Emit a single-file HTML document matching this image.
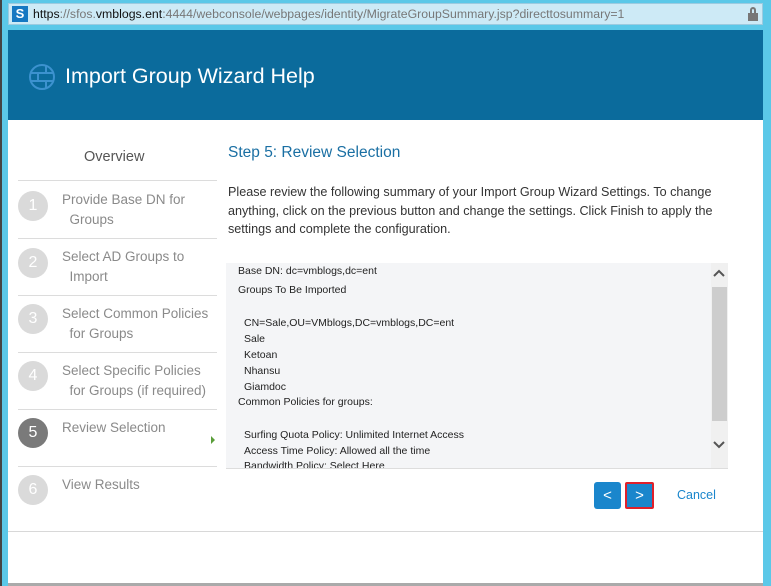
<!DOCTYPE html>
<html><head><style>
*{margin:0;padding:0;box-sizing:border-box}
body{width:771px;height:586px;background:#5bc8e8;font-family:"Liberation Sans",sans-serif;position:relative;overflow:hidden}
.abs{position:absolute}
#url{left:8px;top:3px;width:755px;height:22px;background:#cdeaf6;border:1px solid #9ccbe0}
#hdr{left:8px;top:30px;width:755px;height:90px;background:#0b6b9c}
#main{left:8px;top:120px;width:755px;height:464px;background:#fff}
.nav{left:18px;width:199px;border-top:1px solid #dcdcdc}
.circ{position:absolute;left:0;width:30px;height:30px;border-radius:50%;background:#dadada;color:#fff;font-size:16px;text-align:center;line-height:30px}
.nt{position:absolute;left:44px;color:#8a8a8a;font-size:13.5px;line-height:20px}
.bx{font-size:10.5px;color:#222;position:absolute;left:238px}
</style></head><body>
<div class="abs" style="left:0;top:0;width:2px;height:586px;background:#444"></div>
<div class="abs" id="url">
 <div class="abs" style="left:3px;top:2px;width:16px;height:16px;background:#1578c2;color:#fff;font-size:13px;font-weight:bold;text-align:center;line-height:16px">S</div>
 <div class="abs" style="left:24px;top:3px;font-size:12.3px;color:#777;white-space:nowrap"><span style="color:#111">https</span>://sfos.<span style="color:#111">vmblogs.ent</span>:4444/webconsole/webpages/identity/MigrateGroupSummary.jsp?directtosummary=1</div>
 <div class="abs" style="left:739px;top:9px;width:10px;height:8px;background:#777"></div>
 <div class="abs" style="left:741px;top:3px;width:6px;height:8px;border:2px solid #777;border-bottom:none;border-radius:3px 3px 0 0"></div>
</div>
<div class="abs" id="hdr">
 <svg class="abs" style="left:20px;top:33px" width="28" height="28" viewBox="0 0 28 28" fill="none" stroke="#3c92cf" stroke-width="2"><circle cx="14" cy="14" r="12"/><path d="M2 10H26M2 18H26M10 10V18M18 2V10M18 18V26"/></svg>
 <div class="abs" style="left:57px;top:34px;color:#fff;font-size:21.5px">Import Group Wizard Help</div>
</div>
<div class="abs" id="main"></div>
<div class="abs" style="left:8px;top:531px;width:755px;height:1px;background:#d8d8d8"></div>
<div class="abs" style="left:8px;top:583px;width:755px;height:3px;background:#aaa"></div>
<div class="abs" style="left:84px;top:149px;font-size:14.5px;color:#555">Overview</div>
<div class="abs nav" style="top:180px;height:58px"><div class="circ" style="top:10px">1</div><div class="nt" style="top:9px">Provide Base DN for<br>&nbsp;&nbsp;Groups</div></div>
<div class="abs nav" style="top:238px;height:57px"><div class="circ" style="top:9px">2</div><div class="nt" style="top:8px">Select AD Groups to<br>&nbsp;&nbsp;Import</div></div>
<div class="abs nav" style="top:295px;height:57px"><div class="circ" style="top:8px">3</div><div class="nt" style="top:8px">Select Common Policies<br>&nbsp;&nbsp;for Groups</div></div>
<div class="abs nav" style="top:352px;height:57px"><div class="circ" style="top:8px">4</div><div class="nt" style="top:8px">Select Specific Policies<br>&nbsp;&nbsp;for Groups (if required)</div></div>
<div class="abs nav" style="top:409px;height:57px"><div class="circ" style="top:8px;background:#7a7a7a">5</div><div class="nt" style="top:8px">Review Selection</div>
 <div class="abs" style="left:193px;top:26px;width:0;height:0;border-left:4px solid #5a9e3a;border-top:4px solid transparent;border-bottom:4px solid transparent"></div></div>
<div class="abs nav" style="top:466px;height:57px"><div class="circ" style="top:8px">6</div><div class="nt" style="top:8px">View Results</div></div>
<div class="abs" style="left:228px;top:144px;font-size:15.5px;color:#1a6fa3">Step 5: Review Selection</div>
<div class="abs" style="left:228px;top:183px;width:505px;font-size:12.6px;color:#333;line-height:18.5px">Please review the following summary of your Import Group Wizard Settings. To change anything, click on the previous button and change the settings. Click Finish to apply the settings and complete the configuration.</div>
<div class="abs" style="left:226px;top:263px;width:485px;height:205px;background:#f4f5f7;overflow:hidden"></div>
<div class="abs" style="left:711px;top:263px;width:17px;height:205px;background:#f0f0f0"></div>
<div class="abs" style="left:712px;top:287px;width:15px;height:134px;background:#cdcdcd"></div>
<svg class="abs" style="left:713px;top:440px" width="12" height="10"><path d="M1 2L6 7L11 2" stroke="#555" stroke-width="2" fill="none"/></svg>
<svg class="abs" style="left:713px;top:268px" width="12" height="10"><path d="M1 8L6 3L11 8" stroke="#555" stroke-width="2" fill="none"/></svg>
<div class="abs" style="left:226px;top:468px;width:502px;height:1px;background:#ddd"></div>
<div class="bx" style="top:265px">Base DN: dc=vmblogs,dc=ent</div>
<div class="bx" style="top:284px">Groups To Be Imported</div>
<div class="bx" style="top:316px;left:244px;line-height:15.9px">CN=Sale,OU=VMblogs,DC=vmblogs,DC=ent<br>Sale<br>Ketoan<br>Nhansu<br>Giamdoc</div>
<div class="bx" style="top:396px">Common Policies for groups:</div>
<div class="bx" style="top:428px;left:244px;line-height:15.5px;height:40px;overflow:hidden">Surfing Quota Policy: Unlimited Internet Access<br>Access Time Policy: Allowed all the time<br>Bandwidth Policy: Select Here</div>
<div class="abs" style="left:594px;top:482px;width:27px;height:27px;background:#1a86cc;border-radius:3px;color:#fff;font-size:15px;text-align:center;line-height:27px">&lt;</div>
<div class="abs" style="left:625px;top:482px;width:29px;height:27px;background:#1a86cc;border:2px solid #e0202a;border-radius:2px;color:#fff;font-size:15px;text-align:center;line-height:23px">&gt;</div>
<div class="abs" style="left:677px;top:488px;font-size:12.5px;color:#1a86cc">Cancel</div>
</body></html>
